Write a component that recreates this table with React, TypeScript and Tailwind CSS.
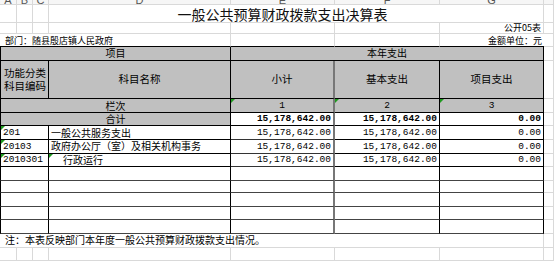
const cols = "grid grid-cols-[17px_16px_16px_182px_104px_105px_104px_10px]";
const light = "border-r border-b border-[#d9d9d9]";
const dark = "border-r border-b border-black";
const num = "font-['Liberation_Mono',monospace] text-[9.5px]";

const Tri = () => (
  <span className="absolute left-0 top-0 h-0 w-0 border-t-[4px] border-r-[4px] border-t-[#1f9a1f] border-r-transparent" />
);

const rows = [
  { code: "201", name: "一般公共服务支出", indent: false, total: "15,178,642.00", basic: "15,178,642.00", proj: "0.00" },
  { code: "20103", name: "政府办公厅（室）及相关机构事务", indent: false, total: "15,178,642.00", basic: "15,178,642.00", proj: "0.00" },
  { code: "2010301", name: "行政运行", indent: true, total: "15,178,642.00", basic: "15,178,642.00", proj: "0.00" },
];

const emptyHeights = ["h-[14px]", "h-[13px]", "h-[14px]", "h-[14px]", "h-[14px]"];

export default function App() {
  return (
    <div className="flex h-[261px] w-[554px] flex-col overflow-hidden bg-white font-['Noto_Sans_CJK_SC',sans-serif] text-black">
      {/* column letters, mostly scrolled out of view */}
      <div className={`${cols} h-[5px] bg-[#f6f6f6] font-['Liberation_Sans',sans-serif] text-[11px] leading-[11px] text-[#555]`}>
        {["A", "B", "C", "D", "E", "F", "G", ""].map((l, i) => (
          <div key={i} className="flex justify-center overflow-hidden border-r border-b border-[#d9d9d9]">
            <span className="-mt-[5px]">{l}</span>
          </div>
        ))}
      </div>

      {/* title */}
      <div className={`${cols} h-[19px]`}>
        <div className={light} />
        <div className={light} />
        <div className={light} />
        <div className={`${light} col-span-4 flex items-center justify-center pr-[27px] text-[14px] leading-none text-[#111]`}>
          一般公共预算财政拨款支出决算表
        </div>
        <div className={light} />
      </div>

      <div className={`${cols} h-[11px]`}>
        <div className={light} />
        <div className={light} />
        <div className={light} />
        <div className={light} />
        <div className={light} />
        <div className={light} />
        <div className={`${light} flex items-end justify-end pr-[2px] text-[9px] leading-[10px]`}>公开05表</div>
        <div className={light} />
      </div>

      <div className={`${cols} h-[13px]`}>
        <div className="col-span-4 flex items-center border-r border-b border-r-[#d9d9d9] border-b-black pl-[5px] text-[9px] leading-none">
          部门：随县殷店镇人民政府
        </div>
        <div className="border-r border-b border-r-[#d9d9d9] border-b-black" />
        <div className="border-r border-b border-r-[#d9d9d9] border-b-black" />
        <div className="flex items-center justify-end border-b border-black pr-[2px] text-[9px] leading-none">
          金额单位：元
        </div>
        <div className={light} />
      </div>

      {/* table header */}
      <div className={`${cols} h-[14px] bg-[#c0c0c0] text-[10px] leading-none`}>
        <div className={`${dark} col-span-4 flex items-center justify-center border-l`}>项目</div>
        <div className={`${dark} col-span-3 flex items-center justify-center`}>本年支出</div>
        <div className={`${light} bg-white`} />
      </div>

      <div className={`${cols} h-[40px] bg-[#c0c0c0] text-[10.5px]`}>
        <div className={`${dark} col-span-3 flex flex-col justify-center gap-[2px] border-l pl-[3px] leading-[11px]`}>
          <span>功能分类</span>
          <span>科目编码</span>
        </div>
        <div className={`${dark} flex items-center justify-center leading-none`}>科目名称</div>
        <div className="flex items-center justify-center border-r-2 border-b border-r-[#777] border-b-black leading-none">小计</div>
        <div className={`${dark} flex items-center justify-center leading-none`}>基本支出</div>
        <div className={`${dark} flex items-center justify-center leading-none`}>项目支出</div>
        <div className={`${light} bg-white`} />
      </div>

      <div className={`${cols} h-[14px] bg-[#c0c0c0] leading-none`}>
        <div className={`${dark} col-span-4 flex items-center justify-center border-l text-[10px]`}>栏次</div>
        <div className={`relative flex items-center justify-center border-r-2 border-b border-r-[#777] border-b-black ${num}`}>
          <Tri />1
        </div>
        <div className={`${dark} relative flex items-center justify-center ${num}`}>
          <Tri />2
        </div>
        <div className={`${dark} relative flex items-center justify-center ${num}`}>
          <Tri />3
        </div>
        <div className={`${light} bg-white`} />
      </div>

      <div className={`${cols} h-[14px] leading-none`}>
        <div className={`${dark} col-span-4 flex items-center justify-center border-l bg-[#c0c0c0] text-[10px]`}>合计</div>
        <div className={`flex items-center justify-end border-r-2 border-b border-r-[#777] border-b-black pr-[2px] font-bold ${num}`}>
          15,178,642.00
        </div>
        <div className={`${dark} flex items-center justify-end pr-[2px] font-bold ${num}`}>15,178,642.00</div>
        <div className={`${dark} flex items-center justify-end pr-[2px] font-bold ${num}`}>0.00</div>
        <div className={light} />
      </div>

      {rows.map((r) => (
        <div key={r.code} className={`${cols} h-[14px] leading-none`}>
          <div className={`${dark} relative col-span-3 flex items-center border-l pl-[2px] ${num}`}>
            <Tri />
            {r.code}
          </div>
          <div className={`${dark} relative flex items-center whitespace-nowrap text-[10px] ${r.indent ? "pl-[14px]" : "pl-[2px]"}`}>
            {r.indent && <Tri />}
            {r.name}
          </div>
          <div className={`flex items-center justify-end border-r-2 border-b border-r-[#777] border-b-[#333] pr-[2px] ${num}`}>{r.total}</div>
          <div className={`${dark} flex items-center justify-end pr-[2px] ${num}`}>{r.basic}</div>
          <div className={`${dark} flex items-center justify-end pr-[2px] ${num}`}>{r.proj}</div>
          <div className={light} />
        </div>
      ))}

      {emptyHeights.map((h, i) => (
        <div key={i} className={`${cols} ${h}`}>
          <div className={`${dark} col-span-3 border-l border-b-[#444]`} />
          <div className={`${dark} border-b-[#444]`} />
          <div className="border-r-2 border-b border-r-[#777] border-b-[#444]" />
          <div className={`${dark} border-b-[#444]`} />
          <div className={`${dark} border-b-[#444]`} />
          <div className={light} />
        </div>
      ))}

      <div className={`${cols} h-[14px]`}>
        <div className={`${light} col-span-7 flex items-center whitespace-nowrap pl-[5px] text-[10px] leading-none`}>
          注：本表反映部门本年度一般公共预算财政拨款支出情况。
        </div>
        <div className={light} />
      </div>

      <div className={`${cols} h-[14px]`}>
        {[0, 1, 2, 3, 4, 5, 6, 7].map((i) => (
          <div key={i} className={light} />
        ))}
      </div>
    </div>
  );
}
